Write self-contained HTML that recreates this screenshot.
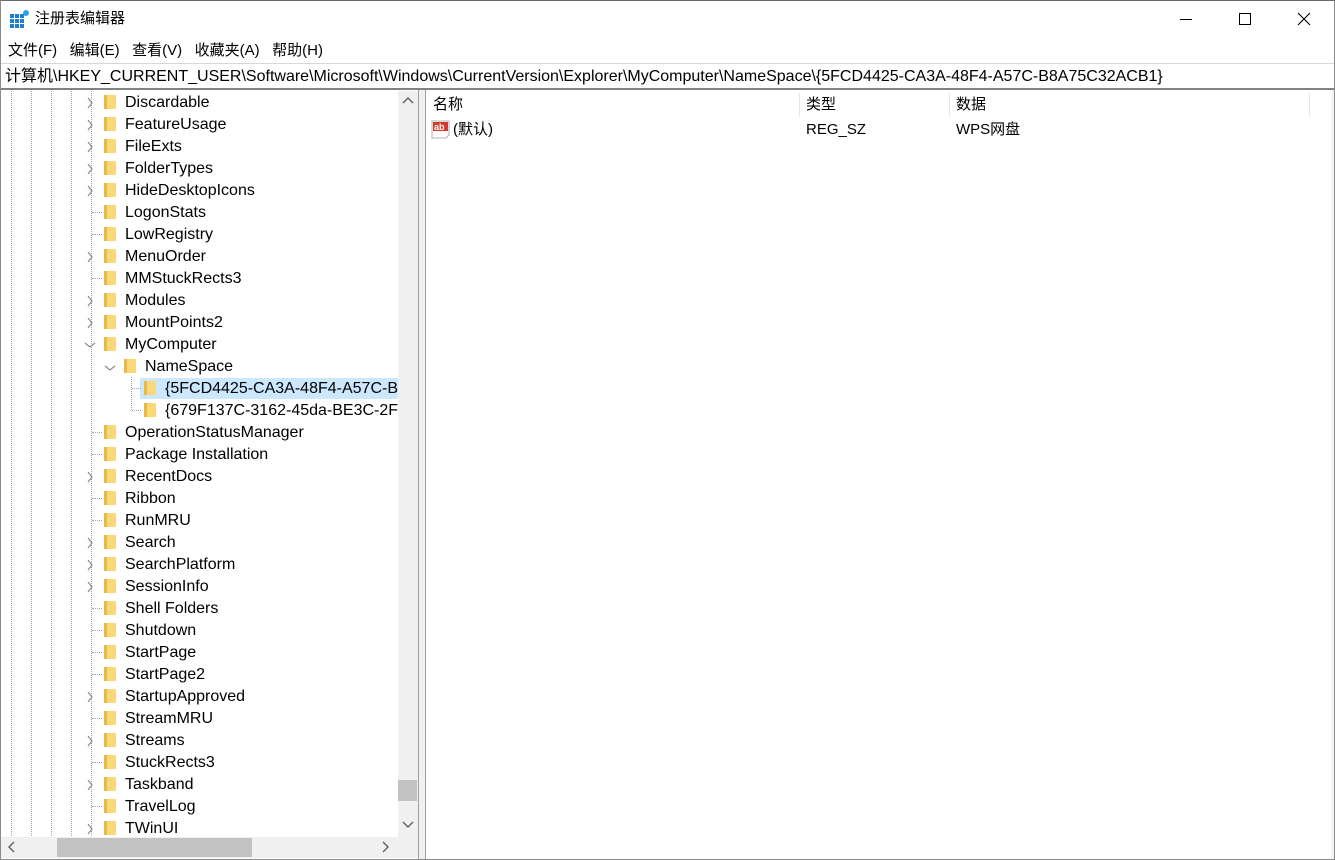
<!DOCTYPE html>
<html><head><meta charset="utf-8"><style>
*{margin:0;padding:0;box-sizing:border-box}
body{width:1335px;height:860px;overflow:hidden;background:#fff;font-family:"Liberation Sans","Noto Sans CJK SC",sans-serif;color:#000;position:relative}
.a{position:absolute}
.f{position:absolute;width:12px;height:14px;background:linear-gradient(90deg,#e8b948 0 3px,#f9d877 3px);}
.vl{position:absolute;width:0;border-left:1px dotted #a0a0a0}
.hl{position:absolute;height:0;border-top:1px dotted #a0a0a0;width:10px}
.t{position:absolute;left:125px;line-height:22px;font-size:16px;white-space:nowrap;margin-top:1px}
</style></head><body>
<div class="a" style="left:0;top:0;width:1335px;height:860px;border:1px solid #8a8a8a;border-top:1px solid #6a6a6a"></div>
<svg class="a" style="left:10px;top:10px" width="20" height="20" viewBox="0 0 20 20"><g fill="#1e7fd0"><rect x="0" y="4" width="4" height="4"/><rect x="5" y="4" width="4" height="4"/><rect x="10" y="4" width="4" height="4"/><rect x="0" y="9" width="4" height="4"/><rect x="5" y="9" width="4" height="4"/><rect x="10" y="9" width="4" height="4"/><rect x="0" y="14" width="4" height="4"/><rect x="5" y="14" width="4" height="4"/><rect x="10" y="14" width="4" height="4"/></g><circle cx="16" cy="3" r="3" fill="#2aa0e8"/></svg>
<div class="a" style="left:35px;top:9px;font-size:15px;line-height:20px">注册表编辑器</div>
<div class="a" style="left:1180px;top:19px;width:12px;border-top:1px solid #000"></div>
<div class="a" style="left:1239px;top:13px;width:12px;height:12px;border:1px solid #000"></div>
<svg class="a" style="left:1297px;top:12px" width="14" height="14"><path d="M1 1L13 13M13 1L1 13" stroke="#000" stroke-width="1.1"/></svg>
<div class="a" style="left:8px;top:40px;font-size:15px;line-height:22px">文件(F)&nbsp;&nbsp;&nbsp;编辑(E)&nbsp;&nbsp;&nbsp;查看(V)&nbsp;&nbsp;&nbsp;收藏夹(A)&nbsp;&nbsp;&nbsp;帮助(H)</div>
<div class="a" style="left:1px;top:63px;width:1333px;height:27px;border-top:1px solid #d8d8d8;border-bottom:2px solid #828282"></div>
<div class="a" style="left:5px;top:66px;font-size:16px;line-height:22px">计算机\HKEY_CURRENT_USER\Software\Microsoft\Windows\CurrentVersion\Explorer\MyComputer\NameSpace\{5FCD4425-CA3A-48F4-A57C-B8A75C32ACB1}</div>
<div class="vl" style="left:11px;top:91px;height:745px"></div>
<div class="vl" style="left:31px;top:91px;height:745px"></div>
<div class="vl" style="left:51px;top:91px;height:745px"></div>
<div class="vl" style="left:71px;top:91px;height:745px"></div>
<div class="vl" style="left:91px;top:91px;height:745px"></div>
<div class="a" style="left:140px;top:378px;width:258px;height:21px;background:#cce8ff"></div>
<div class="vl" style="left:131px;top:377px;height:33px"></div>
<div style="position:absolute;left:0;top:92px">
<svg class="a" style="left:0;top:0" width="100" height="748">
<g fill="#fff"><rect x="85" y="0" width="12" height="0"/></g>
<g fill="none" stroke="#8a8a8a" stroke-width="1.2">
<path d="M88 6l4 5-4 5"/>
<path d="M88 6l4 5-4 5" transform="translate(0,22)"/>
<path d="M88 6l4 5-4 5" transform="translate(0,44)"/>
<path d="M88 6l4 5-4 5" transform="translate(0,66)"/>
<path d="M88 6l4 5-4 5" transform="translate(0,88)"/>
<path d="M88 6l4 5-4 5" transform="translate(0,154)"/>
<path d="M88 6l4 5-4 5" transform="translate(0,198)"/>
<path d="M88 6l4 5-4 5" transform="translate(0,220)"/>
<path d="M85 9l5 4 5-4" transform="translate(0,242)"/>
<path d="M88 6l4 5-4 5" transform="translate(0,374)"/>
<path d="M88 6l4 5-4 5" transform="translate(0,440)"/>
<path d="M88 6l4 5-4 5" transform="translate(0,462)"/>
<path d="M88 6l4 5-4 5" transform="translate(0,484)"/>
<path d="M88 6l4 5-4 5" transform="translate(0,594)"/>
<path d="M88 6l4 5-4 5" transform="translate(0,638)"/>
<path d="M88 6l4 5-4 5" transform="translate(0,682)"/>
<path d="M88 6l4 5-4 5" transform="translate(0,726)"/>
</g>
</svg>
</div>
<svg class="a" style="left:104px;top:362px" width="12" height="12"><path d="M1 4l5 4 5-4" fill="none" stroke="#8a8a8a" stroke-width="1.2"/></svg>
<div class="hl" style="left:92px;top:212px"></div>
<div class="hl" style="left:92px;top:234px"></div>
<div class="hl" style="left:92px;top:278px"></div>
<div class="hl" style="left:92px;top:432px"></div>
<div class="hl" style="left:92px;top:454px"></div>
<div class="hl" style="left:92px;top:498px"></div>
<div class="hl" style="left:92px;top:520px"></div>
<div class="hl" style="left:92px;top:608px"></div>
<div class="hl" style="left:92px;top:630px"></div>
<div class="hl" style="left:92px;top:652px"></div>
<div class="hl" style="left:92px;top:674px"></div>
<div class="hl" style="left:92px;top:718px"></div>
<div class="hl" style="left:92px;top:762px"></div>
<div class="hl" style="left:92px;top:806px"></div>
<div class="hl" style="left:132px;top:388px;width:9px"></div>
<div class="hl" style="left:132px;top:410px;width:9px"></div>
<div class="f" style="left:104px;top:95px"></div><div class="t" style="top:91px">Discardable</div>
<div class="f" style="left:104px;top:117px"></div><div class="t" style="top:113px">FeatureUsage</div>
<div class="f" style="left:104px;top:139px"></div><div class="t" style="top:135px">FileExts</div>
<div class="f" style="left:104px;top:161px"></div><div class="t" style="top:157px">FolderTypes</div>
<div class="f" style="left:104px;top:183px"></div><div class="t" style="top:179px">HideDesktopIcons</div>
<div class="f" style="left:104px;top:205px"></div><div class="t" style="top:201px">LogonStats</div>
<div class="f" style="left:104px;top:227px"></div><div class="t" style="top:223px">LowRegistry</div>
<div class="f" style="left:104px;top:249px"></div><div class="t" style="top:245px">MenuOrder</div>
<div class="f" style="left:104px;top:271px"></div><div class="t" style="top:267px">MMStuckRects3</div>
<div class="f" style="left:104px;top:293px"></div><div class="t" style="top:289px">Modules</div>
<div class="f" style="left:104px;top:315px"></div><div class="t" style="top:311px">MountPoints2</div>
<div class="f" style="left:104px;top:337px"></div><div class="t" style="top:333px">MyComputer</div>
<div class="f" style="left:124px;top:359px"></div><div class="t" style="top:355px;left:145px">NameSpace</div>
<div class="f" style="left:144px;top:381px"></div><div class="t" style="top:377px;left:165px;width:233px;overflow:hidden">{5FCD4425-CA3A-48F4-A57C-B8A75C32ACB1}</div>
<div class="f" style="left:144px;top:403px"></div><div class="t" style="top:399px;left:165px;width:233px;overflow:hidden">{679F137C-3162-45da-BE3C-2F9C3D093F64}</div>
<div class="f" style="left:104px;top:425px"></div><div class="t" style="top:421px">OperationStatusManager</div>
<div class="f" style="left:104px;top:447px"></div><div class="t" style="top:443px">Package Installation</div>
<div class="f" style="left:104px;top:469px"></div><div class="t" style="top:465px">RecentDocs</div>
<div class="f" style="left:104px;top:491px"></div><div class="t" style="top:487px">Ribbon</div>
<div class="f" style="left:104px;top:513px"></div><div class="t" style="top:509px">RunMRU</div>
<div class="f" style="left:104px;top:535px"></div><div class="t" style="top:531px">Search</div>
<div class="f" style="left:104px;top:557px"></div><div class="t" style="top:553px">SearchPlatform</div>
<div class="f" style="left:104px;top:579px"></div><div class="t" style="top:575px">SessionInfo</div>
<div class="f" style="left:104px;top:601px"></div><div class="t" style="top:597px">Shell Folders</div>
<div class="f" style="left:104px;top:623px"></div><div class="t" style="top:619px">Shutdown</div>
<div class="f" style="left:104px;top:645px"></div><div class="t" style="top:641px">StartPage</div>
<div class="f" style="left:104px;top:667px"></div><div class="t" style="top:663px">StartPage2</div>
<div class="f" style="left:104px;top:689px"></div><div class="t" style="top:685px">StartupApproved</div>
<div class="f" style="left:104px;top:711px"></div><div class="t" style="top:707px">StreamMRU</div>
<div class="f" style="left:104px;top:733px"></div><div class="t" style="top:729px">Streams</div>
<div class="f" style="left:104px;top:755px"></div><div class="t" style="top:751px">StuckRects3</div>
<div class="f" style="left:104px;top:777px"></div><div class="t" style="top:773px">Taskband</div>
<div class="f" style="left:104px;top:799px"></div><div class="t" style="top:795px">TravelLog</div>
<div class="f" style="left:104px;top:821px"></div><div class="t" style="top:817px;height:19px;overflow:hidden">TWinUI</div>
<div class="a" style="left:398px;top:91px;width:20px;height:747px;background:#f0f0f0"></div>
<div class="a" style="left:398px;top:780px;width:19px;height:21px;background:#c2c2c2"></div>
<svg class="a" style="left:402px;top:96px" width="12" height="10"><path d="M1 7l5-5 5 5" fill="none" stroke="#606060" stroke-width="1.4"/></svg>
<svg class="a" style="left:402px;top:820px" width="12" height="10"><path d="M1 2l5 5 5-5" fill="none" stroke="#606060" stroke-width="1.4"/></svg>
<div class="a" style="left:1px;top:837px;width:417px;height:21px;background:#f0f0f0"></div>
<div class="a" style="left:57px;top:838px;width:195px;height:19px;background:#c2c2c2"></div>
<svg class="a" style="left:7px;top:841px" width="10" height="12"><path d="M7 1l-5 5 5 5" fill="none" stroke="#606060" stroke-width="1.4"/></svg>
<svg class="a" style="left:381px;top:841px" width="10" height="12"><path d="M2 1l5 5-5 5" fill="none" stroke="#606060" stroke-width="1.4"/></svg>
<div class="a" style="left:418px;top:90px;width:8px;height:769px;background:#f0f0f0;border-left:1px solid #a0a0a0;border-right:1px solid #a0a0a0"></div>
<div class="a" style="left:433px;top:94px;font-size:15px;line-height:22px">名称</div>
<div class="a" style="left:799px;top:93px;height:24px;border-left:1px solid #e5e5e5"></div>
<div class="a" style="left:806px;top:94px;font-size:15px;line-height:22px">类型</div>
<div class="a" style="left:949px;top:93px;height:24px;border-left:1px solid #e5e5e5"></div>
<div class="a" style="left:956px;top:94px;font-size:15px;line-height:22px">数据</div>
<div class="a" style="left:1309px;top:93px;height:24px;border-left:1px solid #e5e5e5"></div>
<svg class="a" style="left:431px;top:120px" width="20" height="20"><path d="M1 1h17v14l-3 3H1z" fill="#fff" stroke="#b0b0b0"/><rect x="2" y="2" width="15" height="9" fill="#d63a2e"/><text x="3" y="10" font-size="9" font-weight="bold" fill="#fff" font-family="Liberation Sans">ab</text></svg>
<div class="a" style="left:453px;top:119px;font-size:15px;line-height:22px">(默认)</div>
<div class="a" style="left:806px;top:119px;font-size:15px;line-height:22px">REG_SZ</div>
<div class="a" style="left:956px;top:119px;font-size:15px;line-height:22px">WPS网盘</div>
<div class="a" style="left:1331px;top:90px;width:3px;height:769px;background:#f4f4f4"></div>
</body></html>
